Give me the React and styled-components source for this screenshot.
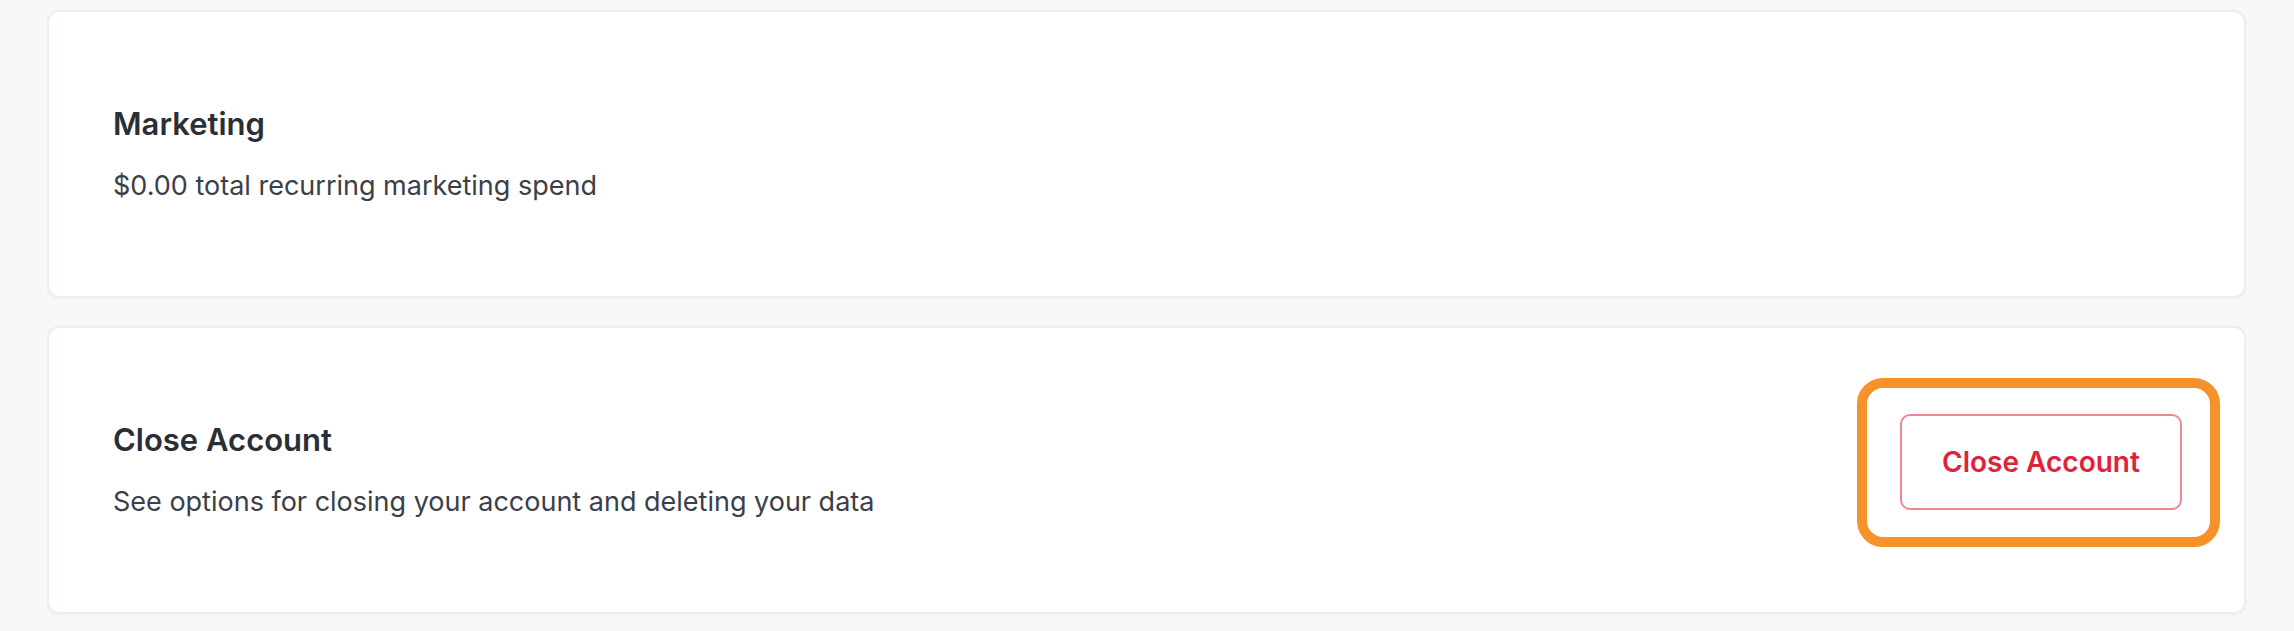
import React from 'react';
import styled, {createGlobalStyle} from 'styled-components';

const GlobalStyle = createGlobalStyle`
  html, body {
    margin: 0;
    padding: 0;
    background: #f7f8fa;
    font-family: Inter, "Noto Sans", "Liberation Sans", sans-serif;
  }
`

const Page = styled.div`
  display: flex;
  flex-direction: column;
  gap: 28px;
  padding: 10px 48px 18px 47px;
  min-height: 631px;
  box-sizing: border-box;
`

const Card = styled.section`
  display: flex;
  align-items: center;
  justify-content: space-between;
  height: 288px;
  box-sizing: border-box;
  padding: 0 24px 0 64px;
  background: #ffffff;
  border: 2px solid #eceef1;
  border-radius: 12px;
  box-shadow: 0 1px 3px rgba(20, 30, 50, 0.04);
`

const Info = styled.div`
  display: flex;
  flex-direction: column;
  gap: 33px;
  margin-top: -2px;
`

const Title = styled.h3`
  margin: 0;
  font-size: 31px;
  line-height: 1;
  font-weight: 600;
  color: #2a2e35;
`

const Desc = styled.p`
  margin: 0;
  font-size: 27px;
  line-height: 1;
  font-weight: 400;
  color: #3b4048;
`

const Highlight = styled.div`
  margin-bottom: 15px;
  padding: 26px 28px 27px 33px;
  border: 10px solid #f7922b;
  border-radius: 26px;
`

const DangerButton = styled.button`
  display: flex;
  align-items: center;
  justify-content: center;
  width: 282px;
  height: 96px;
  box-sizing: border-box;
  background: #ffffff;
  border: 2px solid #f08691;
  border-radius: 10px;
  color: #e0233b;
  font-family: inherit;
  font-size: 28px;
  font-weight: 600;
  cursor: pointer;
`

const App = () => {
  return (
    <>
      <GlobalStyle/>
      <Page>
        <Card>
          <Info>
            <Title>Marketing</Title>
            <Desc>$0.00 total recurring marketing spend</Desc>
          </Info>
        </Card>
        <Card>
          <Info>
            <Title>Close Account</Title>
            <Desc>See options for closing your account and deleting your data</Desc>
          </Info>
          <Highlight>
            <DangerButton>Close Account</DangerButton>
          </Highlight>
        </Card>
      </Page>
    </>
  )
}

export default App
